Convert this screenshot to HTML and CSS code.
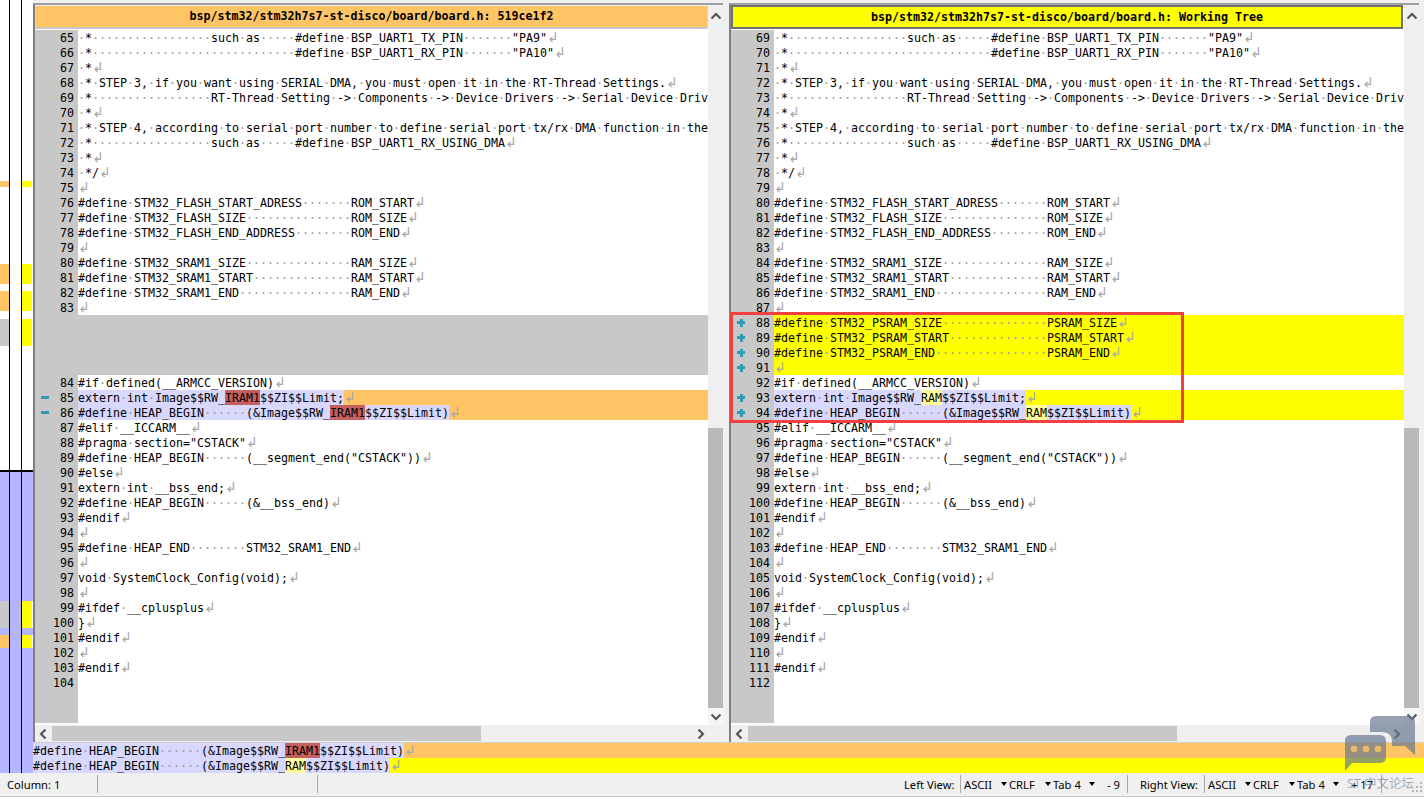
FILE: index.html
```html
<!DOCTYPE html>
<html lang="en">
<head>
  <meta charset="UTF-8">
  <title>bsp/stm32/stm32h7s7-st-disco/board/board.h</title>
  <link rel="stylesheet" href="styles.css">
</head>
<body>

<div class="window">
  <!-- location pane -->
  <div class="loc">
    <div class="loc-col col-a">
      <span class="seg" style="height:178px"></span><span class="seg orange" style="height:6px"></span>
      <span class="seg" style="height:77px"></span><span class="seg orange" style="height:20px"></span>
      <span class="seg" style="height:7px"></span><span class="seg orange" style="height:20px"></span>
      <span class="seg" style="height:8px"></span><span class="seg gray" style="height:27px"></span>
      <span class="seg" style="height:124px"></span><span class="seg black"></span>
      <span class="seg purple" style="height:129px"></span><span class="seg gray" style="height:27px"></span>
      <span class="seg purple" style="height:7px"></span><span class="seg orange" style="height:13px"></span>
      <span class="seg purple fill"></span>
    </div>
    <div class="loc-col col-b">
      <span class="seg" style="height:467px"></span><span class="seg black"></span>
      <span class="seg purple fill"></span>
    </div>
    <div class="loc-col col-c">
      <span class="seg" style="height:178px"></span><span class="seg yellow" style="height:6px"></span>
      <span class="seg" style="height:77px"></span><span class="seg yellow" style="height:20px"></span>
      <span class="seg" style="height:7px"></span><span class="seg yellow" style="height:20px"></span>
      <span class="seg" style="height:8px"></span><span class="seg yellow" style="height:27px"></span>
      <span class="seg" style="height:124px"></span><span class="seg black"></span>
      <span class="seg purple" style="height:129px"></span><span class="seg yellow" style="height:27px"></span>
      <span class="seg purple" style="height:7px"></span><span class="seg yellow" style="height:13px"></span>
      <span class="seg purple fill"></span>
    </div>
  </div>

  <div class="main">
    <div class="panes">

      <!-- left file -->
      <div class="pane">
        <div class="pane-body">
          <div class="view">
            <div class="pane-title left-title">bsp/stm32/stm32h7s7-st-disco/board/board.h: 519ce1f2</div>
            <div class="lines">
              <div class="row"><span class="mark"></span><span class="num">65</span><span class="code"><i>·</i>*<i>·················</i>such<i>·</i>as<i>·····</i>#define<i>·</i>BSP_UART1_TX_PIN<i>·······</i>"PA9"<b>↲</b></span></div>
              <div class="row"><span class="mark"></span><span class="num">66</span><span class="code"><i>·</i>*<i>·····························</i>#define<i>·</i>BSP_UART1_RX_PIN<i>·······</i>"PA10"<b>↲</b></span></div>
              <div class="row"><span class="mark"></span><span class="num">67</span><span class="code"><i>·</i>*<b>↲</b></span></div>
              <div class="row"><span class="mark"></span><span class="num">68</span><span class="code"><i>·</i>*<i>·</i>STEP<i>·</i>3,<i>·</i>if<i>·</i>you<i>·</i>want<i>·</i>using<i>·</i>SERIAL<i>·</i>DMA,<i>·</i>you<i>·</i>must<i>·</i>open<i>·</i>it<i>·</i>in<i>·</i>the<i>·</i>RT-Thread<i>·</i>Settings.<b>↲</b></span></div>
              <div class="row"><span class="mark"></span><span class="num">69</span><span class="code"><i>·</i>*<i>·················</i>RT-Thread<i>·</i>Setting<i>·</i>-&gt;<i>·</i>Components<i>·</i>-&gt;<i>·</i>Device<i>·</i>Drivers<i>·</i>-&gt;<i>·</i>Serial<i>·</i>Device<i>·</i>Drivers<b>↲</b></span></div>
              <div class="row"><span class="mark"></span><span class="num">70</span><span class="code"><i>·</i>*<b>↲</b></span></div>
              <div class="row"><span class="mark"></span><span class="num">71</span><span class="code"><i>·</i>*<i>·</i>STEP<i>·</i>4,<i>·</i>according<i>·</i>to<i>·</i>serial<i>·</i>port<i>·</i>number<i>·</i>to<i>·</i>define<i>·</i>serial<i>·</i>port<i>·</i>tx/rx<i>·</i>DMA<i>·</i>function<i>·</i>in<i>·</i>the<i>·</i>board.h<b>↲</b></span></div>
              <div class="row"><span class="mark"></span><span class="num">72</span><span class="code"><i>·</i>*<i>·················</i>such<i>·</i>as<i>·····</i>#define<i>·</i>BSP_UART1_RX_USING_DMA<b>↲</b></span></div>
              <div class="row"><span class="mark"></span><span class="num">73</span><span class="code"><i>·</i>*<b>↲</b></span></div>
              <div class="row"><span class="mark"></span><span class="num">74</span><span class="code"><i>·</i>*/<b>↲</b></span></div>
              <div class="row"><span class="mark"></span><span class="num">75</span><span class="code"><b>↲</b></span></div>
              <div class="row"><span class="mark"></span><span class="num">76</span><span class="code">#define<i>·</i>STM32_FLASH_START_ADRESS<i>·······</i>ROM_START<b>↲</b></span></div>
              <div class="row"><span class="mark"></span><span class="num">77</span><span class="code">#define<i>·</i>STM32_FLASH_SIZE<i>···············</i>ROM_SIZE<b>↲</b></span></div>
              <div class="row"><span class="mark"></span><span class="num">78</span><span class="code">#define<i>·</i>STM32_FLASH_END_ADDRESS<i>········</i>ROM_END<b>↲</b></span></div>
              <div class="row"><span class="mark"></span><span class="num">79</span><span class="code"><b>↲</b></span></div>
              <div class="row"><span class="mark"></span><span class="num">80</span><span class="code">#define<i>·</i>STM32_SRAM1_SIZE<i>···············</i>RAM_SIZE<b>↲</b></span></div>
              <div class="row"><span class="mark"></span><span class="num">81</span><span class="code">#define<i>·</i>STM32_SRAM1_START<i>··············</i>RAM_START<b>↲</b></span></div>
              <div class="row"><span class="mark"></span><span class="num">82</span><span class="code">#define<i>·</i>STM32_SRAM1_END<i>················</i>RAM_END<b>↲</b></span></div>
              <div class="row"><span class="mark"></span><span class="num">83</span><span class="code"><b>↲</b></span></div>
              <div class="row filler"></div>
              <div class="row filler"></div>
              <div class="row filler"></div>
              <div class="row filler"></div>
              <div class="row"><span class="mark"></span><span class="num">84</span><span class="code">#if<i>·</i>defined(__ARMCC_VERSION)<b>↲</b></span></div>
              <div class="row"><span class="mark minus"></span><span class="num">85</span><span class="code orange"><span class="hi">extern<i>·</i>int<i>·</i>Image$$RW_<span class="del">IRAM1</span>$$ZI$$Limit;</span><b>↲</b></span></div>
              <div class="row"><span class="mark minus"></span><span class="num">86</span><span class="code orange"><span class="hi">#define<i>·</i>HEAP_BEGIN<i>······</i>(&amp;Image$$RW_<span class="del">IRAM1</span>$$ZI$$Limit)</span><b>↲</b></span></div>
              <div class="row"><span class="mark"></span><span class="num">87</span><span class="code">#elif<i>·</i>__ICCARM__<b>↲</b></span></div>
              <div class="row"><span class="mark"></span><span class="num">88</span><span class="code">#pragma<i>·</i>section="CSTACK"<b>↲</b></span></div>
              <div class="row"><span class="mark"></span><span class="num">89</span><span class="code">#define<i>·</i>HEAP_BEGIN<i>······</i>(__segment_end("CSTACK"))<b>↲</b></span></div>
              <div class="row"><span class="mark"></span><span class="num">90</span><span class="code">#else<b>↲</b></span></div>
              <div class="row"><span class="mark"></span><span class="num">91</span><span class="code">extern<i>·</i>int<i>·</i>__bss_end;<b>↲</b></span></div>
              <div class="row"><span class="mark"></span><span class="num">92</span><span class="code">#define<i>·</i>HEAP_BEGIN<i>······</i>(&amp;__bss_end)<b>↲</b></span></div>
              <div class="row"><span class="mark"></span><span class="num">93</span><span class="code">#endif<b>↲</b></span></div>
              <div class="row"><span class="mark"></span><span class="num">94</span><span class="code"><b>↲</b></span></div>
              <div class="row"><span class="mark"></span><span class="num">95</span><span class="code">#define<i>·</i>HEAP_END<i>········</i>STM32_SRAM1_END<b>↲</b></span></div>
              <div class="row"><span class="mark"></span><span class="num">96</span><span class="code"><b>↲</b></span></div>
              <div class="row"><span class="mark"></span><span class="num">97</span><span class="code">void<i>·</i>SystemClock_Config(void);<b>↲</b></span></div>
              <div class="row"><span class="mark"></span><span class="num">98</span><span class="code"><b>↲</b></span></div>
              <div class="row"><span class="mark"></span><span class="num">99</span><span class="code">#ifdef<i>·</i>__cplusplus<b>↲</b></span></div>
              <div class="row"><span class="mark"></span><span class="num">100</span><span class="code">}<b>↲</b></span></div>
              <div class="row"><span class="mark"></span><span class="num">101</span><span class="code">#endif<b>↲</b></span></div>
              <div class="row"><span class="mark"></span><span class="num">102</span><span class="code"><b>↲</b></span></div>
              <div class="row"><span class="mark"></span><span class="num">103</span><span class="code">#endif<b>↲</b></span></div>
              <div class="row"><span class="mark"></span><span class="num">104</span><span class="code"></span></div>
              <div class="row rest"><span class="mark"></span><span class="num"></span><span class="code"></span></div>
            </div>
          </div>
          <div class="vscroll">
            <span class="arrow-box"><svg width="12" height="10" viewBox="0 0 12 10"><path d="M1.5 7.5 6 3l4.5 4.5" class="chev"/></svg></span>
            <span class="vtrack"></span>
            <span class="vthumb"></span>
            <span class="arrow-box down"><svg width="12" height="10" viewBox="0 0 12 10"><path d="M1.5 2.5 6 7l4.5-4.5" class="chev"/></svg></span>
          </div>
        </div>
        <div class="hscroll">
          <span class="h-arrow"><svg width="10" height="12" viewBox="0 0 10 12"><path d="M7.5 1.5 3 6l4.5 4.5" class="chev"/></svg></span>
          <span class="hthumb"></span>
          <span class="htrack"></span>
          <span class="h-arrow"><svg width="10" height="12" viewBox="0 0 10 12"><path d="M2.5 1.5 7 6l-4.5 4.5" class="chev"/></svg></span>
          <span class="corner"></span>
        </div>
      </div>

      <!-- right file -->
      <div class="pane">
        <div class="pane-body">
          <div class="view">
            <div class="pane-title right-title">bsp/stm32/stm32h7s7-st-disco/board/board.h: Working Tree</div>
            <div class="lines">
              <div class="row"><span class="mark"></span><span class="num">69</span><span class="code"><i>·</i>*<i>·················</i>such<i>·</i>as<i>·····</i>#define<i>·</i>BSP_UART1_TX_PIN<i>·······</i>"PA9"<b>↲</b></span></div>
              <div class="row"><span class="mark"></span><span class="num">70</span><span class="code"><i>·</i>*<i>·····························</i>#define<i>·</i>BSP_UART1_RX_PIN<i>·······</i>"PA10"<b>↲</b></span></div>
              <div class="row"><span class="mark"></span><span class="num">71</span><span class="code"><i>·</i>*<b>↲</b></span></div>
              <div class="row"><span class="mark"></span><span class="num">72</span><span class="code"><i>·</i>*<i>·</i>STEP<i>·</i>3,<i>·</i>if<i>·</i>you<i>·</i>want<i>·</i>using<i>·</i>SERIAL<i>·</i>DMA,<i>·</i>you<i>·</i>must<i>·</i>open<i>·</i>it<i>·</i>in<i>·</i>the<i>·</i>RT-Thread<i>·</i>Settings.<b>↲</b></span></div>
              <div class="row"><span class="mark"></span><span class="num">73</span><span class="code"><i>·</i>*<i>·················</i>RT-Thread<i>·</i>Setting<i>·</i>-&gt;<i>·</i>Components<i>·</i>-&gt;<i>·</i>Device<i>·</i>Drivers<i>·</i>-&gt;<i>·</i>Serial<i>·</i>Device<i>·</i>Drivers<b>↲</b></span></div>
              <div class="row"><span class="mark"></span><span class="num">74</span><span class="code"><i>·</i>*<b>↲</b></span></div>
              <div class="row"><span class="mark"></span><span class="num">75</span><span class="code"><i>·</i>*<i>·</i>STEP<i>·</i>4,<i>·</i>according<i>·</i>to<i>·</i>serial<i>·</i>port<i>·</i>number<i>·</i>to<i>·</i>define<i>·</i>serial<i>·</i>port<i>·</i>tx/rx<i>·</i>DMA<i>·</i>function<i>·</i>in<i>·</i>the<i>·</i>board.h<b>↲</b></span></div>
              <div class="row"><span class="mark"></span><span class="num">76</span><span class="code"><i>·</i>*<i>·················</i>such<i>·</i>as<i>·····</i>#define<i>·</i>BSP_UART1_RX_USING_DMA<b>↲</b></span></div>
              <div class="row"><span class="mark"></span><span class="num">77</span><span class="code"><i>·</i>*<b>↲</b></span></div>
              <div class="row"><span class="mark"></span><span class="num">78</span><span class="code"><i>·</i>*/<b>↲</b></span></div>
              <div class="row"><span class="mark"></span><span class="num">79</span><span class="code"><b>↲</b></span></div>
              <div class="row"><span class="mark"></span><span class="num">80</span><span class="code">#define<i>·</i>STM32_FLASH_START_ADRESS<i>·······</i>ROM_START<b>↲</b></span></div>
              <div class="row"><span class="mark"></span><span class="num">81</span><span class="code">#define<i>·</i>STM32_FLASH_SIZE<i>···············</i>ROM_SIZE<b>↲</b></span></div>
              <div class="row"><span class="mark"></span><span class="num">82</span><span class="code">#define<i>·</i>STM32_FLASH_END_ADDRESS<i>········</i>ROM_END<b>↲</b></span></div>
              <div class="row"><span class="mark"></span><span class="num">83</span><span class="code"><b>↲</b></span></div>
              <div class="row"><span class="mark"></span><span class="num">84</span><span class="code">#define<i>·</i>STM32_SRAM1_SIZE<i>···············</i>RAM_SIZE<b>↲</b></span></div>
              <div class="row"><span class="mark"></span><span class="num">85</span><span class="code">#define<i>·</i>STM32_SRAM1_START<i>··············</i>RAM_START<b>↲</b></span></div>
              <div class="row"><span class="mark"></span><span class="num">86</span><span class="code">#define<i>·</i>STM32_SRAM1_END<i>················</i>RAM_END<b>↲</b></span></div>
              <div class="row"><span class="mark"></span><span class="num">87</span><span class="code"><b>↲</b></span></div>
              <div class="row"><span class="mark plus"></span><span class="num">88</span><span class="code yellow">#define<i>·</i>STM32_PSRAM_SIZE<i>···············</i>PSRAM_SIZE<b>↲</b></span></div>
              <div class="row"><span class="mark plus"></span><span class="num">89</span><span class="code yellow">#define<i>·</i>STM32_PSRAM_START<i>··············</i>PSRAM_START<b>↲</b></span></div>
              <div class="row"><span class="mark plus"></span><span class="num">90</span><span class="code yellow">#define<i>·</i>STM32_PSRAM_END<i>················</i>PSRAM_END<b>↲</b></span></div>
              <div class="row"><span class="mark plus"></span><span class="num">91</span><span class="code yellow"><b>↲</b></span></div>
              <div class="row"><span class="mark"></span><span class="num">92</span><span class="code">#if<i>·</i>defined(__ARMCC_VERSION)<b>↲</b></span></div>
              <div class="row"><span class="mark plus"></span><span class="num">93</span><span class="code yellow"><span class="hi">extern<i>·</i>int<i>·</i>Image$$RW_<span class="add">RAM</span>$$ZI$$Limit;</span><b>↲</b></span></div>
              <div class="row"><span class="mark plus"></span><span class="num">94</span><span class="code yellow"><span class="hi">#define<i>·</i>HEAP_BEGIN<i>······</i>(&amp;Image$$RW_<span class="add">RAM</span>$$ZI$$Limit)</span><b>↲</b></span></div>
              <div class="row"><span class="mark"></span><span class="num">95</span><span class="code">#elif<i>·</i>__ICCARM__<b>↲</b></span></div>
              <div class="row"><span class="mark"></span><span class="num">96</span><span class="code">#pragma<i>·</i>section="CSTACK"<b>↲</b></span></div>
              <div class="row"><span class="mark"></span><span class="num">97</span><span class="code">#define<i>·</i>HEAP_BEGIN<i>······</i>(__segment_end("CSTACK"))<b>↲</b></span></div>
              <div class="row"><span class="mark"></span><span class="num">98</span><span class="code">#else<b>↲</b></span></div>
              <div class="row"><span class="mark"></span><span class="num">99</span><span class="code">extern<i>·</i>int<i>·</i>__bss_end;<b>↲</b></span></div>
              <div class="row"><span class="mark"></span><span class="num">100</span><span class="code">#define<i>·</i>HEAP_BEGIN<i>······</i>(&amp;__bss_end)<b>↲</b></span></div>
              <div class="row"><span class="mark"></span><span class="num">101</span><span class="code">#endif<b>↲</b></span></div>
              <div class="row"><span class="mark"></span><span class="num">102</span><span class="code"><b>↲</b></span></div>
              <div class="row"><span class="mark"></span><span class="num">103</span><span class="code">#define<i>·</i>HEAP_END<i>········</i>STM32_SRAM1_END<b>↲</b></span></div>
              <div class="row"><span class="mark"></span><span class="num">104</span><span class="code"><b>↲</b></span></div>
              <div class="row"><span class="mark"></span><span class="num">105</span><span class="code">void<i>·</i>SystemClock_Config(void);<b>↲</b></span></div>
              <div class="row"><span class="mark"></span><span class="num">106</span><span class="code"><b>↲</b></span></div>
              <div class="row"><span class="mark"></span><span class="num">107</span><span class="code">#ifdef<i>·</i>__cplusplus<b>↲</b></span></div>
              <div class="row"><span class="mark"></span><span class="num">108</span><span class="code">}<b>↲</b></span></div>
              <div class="row"><span class="mark"></span><span class="num">109</span><span class="code">#endif<b>↲</b></span></div>
              <div class="row"><span class="mark"></span><span class="num">110</span><span class="code"><b>↲</b></span></div>
              <div class="row"><span class="mark"></span><span class="num">111</span><span class="code">#endif<b>↲</b></span></div>
              <div class="row"><span class="mark"></span><span class="num">112</span><span class="code"></span></div>
              <div class="row rest"><span class="mark"></span><span class="num"></span><span class="code"></span></div>
            </div>
          </div>
          <div class="vscroll">
            <span class="arrow-box"><svg width="12" height="10" viewBox="0 0 12 10"><path d="M1.5 7.5 6 3l4.5 4.5" class="chev"/></svg></span>
            <span class="vtrack"></span>
            <span class="vthumb"></span>
            <span class="arrow-box down"><svg width="12" height="10" viewBox="0 0 12 10"><path d="M1.5 2.5 6 7l4.5-4.5" class="chev"/></svg></span>
          </div>
        </div>
        <div class="hscroll">
          <span class="h-arrow"><svg width="10" height="12" viewBox="0 0 10 12"><path d="M7.5 1.5 3 6l4.5 4.5" class="chev"/></svg></span>
          <span class="hthumb"></span>
          <span class="htrack"></span>
          <span class="h-arrow"><svg width="10" height="12" viewBox="0 0 10 12"><path d="M2.5 1.5 7 6l-4.5 4.5" class="chev"/></svg></span>
          <span class="corner"></span>
        </div>
      </div>
    </div>

    <!-- current line diff -->
    <div class="diff">
      <div class="diff-row orange"><span class="hi">#define<i>·</i>HEAP_BEGIN<i>······</i>(&amp;Image$$RW_<span class="del">IRAM1</span>$$ZI$$Limit)</span><b>↲</b></div>
      <div class="diff-row yellow"><span class="hi">#define<i>·</i>HEAP_BEGIN<i>······</i>(&amp;Image$$RW_<span class="add">RAM</span>$$ZI$$Limit)</span><b>↲</b></div>
    </div>
  </div>
</div>

<div class="status">
  <div class="cell col-cell">Column: 1</div>
  <div class="cell blank-cell"></div>
  <div class="cell view-label">Left View:</div>
  <div class="cell combo enc sep">ASCII<span class="caret"></span></div>
  <div class="cell combo eol">CRLF<span class="caret"></span></div>
  <div class="cell combo tab">Tab 4<span class="caret"></span></div>
  <div class="cell count left-count">- 9</div>
  <div class="cell view-label right-label sep">Right View:</div>
  <div class="cell combo enc sep">ASCII<span class="caret"></span></div>
  <div class="cell combo eol">CRLF<span class="caret"></span></div>
  <div class="cell combo tab">Tab 4<span class="caret"></span></div>
  <div class="cell count right-count">+ 17</div>
  <div class="cell grip sep">
    <svg width="12" height="12" viewBox="0 0 12 12"><path d="M9 1h2v2H9zM5 5h2v2H5zM9 5h2v2H9zM1 9h2v2H1zM5 9h2v2H5zM9 9h2v2H9z" fill="#b4b4b4"/></svg>
  </div>
</div>
<div class="bottom-edge"></div>

<!-- red box drawn over the added lines -->
<div class="callout"></div>

<!-- forum watermark -->
<div class="watermark">
  <svg width="74" height="58" viewBox="0 0 74 58">
    <path d="M31 1H64Q70 1 70 7V40L60 31H47V26Q47 17 36 17H25V7Q25 1 31 1Z" class="bubble"/>
    <path d="M6 20H35Q41 20 41 26V42Q41 48 35 48H7L0 56V26Q0 20 6 20Z" class="bubble"/>
    <circle cx="9" cy="34" r="3.3" class="dot"/>
    <circle cx="21" cy="34" r="3.3" class="dot"/>
    <circle cx="33" cy="34" r="3.3" class="dot"/>
  </svg>
  <span class="wm-text">ST 中文论坛</span>
</div>

</body>
</html>
```

FILE: styles.css
```css
html, body {
  margin: 0;
  padding: 0;
  height: 799px;
  overflow: hidden;
}
body {
  background-color: #f0f0f0;
  font-family: "DejaVu Sans Mono", monospace;
  position: relative;
}
.window {
  display: flex;
  height: 773px;
}

/* location pane */
.loc {
  width: 33px;
  display: flex;
  background-color: #fff;
  flex-shrink: 0;
}
.loc-col {
  display: flex;
  flex-direction: column;
  box-sizing: border-box;
  padding-top: 3px;
}
.col-a {
  width: 10px;
  border-right: 1px solid #000;
}
.col-b {
  width: 12px;
  border-right: 1px solid #000;
}
.col-c {
  width: 11px;
}
.seg {
  display: block;
  flex-shrink: 0;
}
.seg.fill {
  flex: 1;
}
.seg.black {
  height: 2px;
  background-color: #000;
}
.seg.purple {
  background-color: #b4b4ff;
}
.seg.gray {
  background-color: #c8c8c8;
}
.seg.orange {
  background-color: #ffc565;
}
.seg.yellow {
  background-color: #ffff00;
  margin-right: 1px;
}

/* file panes */
.main {
  flex: 1;
  display: flex;
  flex-direction: column;
  min-width: 0;
}
.panes {
  display: flex;
  height: 743px;
  flex-shrink: 0;
  padding-top: 3px;
  box-sizing: border-box;
}
.pane {
  width: 690px;
  margin-right: 6px;
  display: flex;
  flex-direction: column;
  border-left: 2px solid #808080;
  border-top: 2px solid #a0a0a0;
  box-sizing: border-box;
}
.pane:last-child {
  margin-right: 0;
}
.pane-body {
  flex: 1;
  display: flex;
  min-height: 0;
}
.view {
  width: 673px;
  display: flex;
  flex-direction: column;
  background-color: #fff;
}
.pane-title {
  height: 24px;
  box-sizing: border-box;
  text-align: center;
  font-size: 11.63px;
  font-weight: bold;
  line-height: 21px;
  flex-shrink: 0;
}
.left-title {
  background-color: #ffc565;
  border: 1px solid #d8d8d8;
  border-top: 1px solid #f0f0f0;
  border-bottom: 2px solid #c8c8c8;
}
.right-title {
  background-color: #ffff00;
  border: 2px solid #707070;
  border-bottom-width: 2px;
  margin-right: 1px;
}
.lines {
  flex: 1;
  display: flex;
  flex-direction: column;
  min-height: 0;
  padding-top: 1px;
}
.row {
  display: flex;
  height: 15px;
  flex-shrink: 0;
  font-size: 11.63px;
  line-height: 17px;
  white-space: pre;
}
.row.rest {
  flex: 1;
  margin-bottom: 2px;
}
.row.filler {
  background-color: #c8c8c8;
}
.mark {
  width: 18px;
  background-color: #c8c8c8;
  flex-shrink: 0;
}
.mark.minus {
  background: linear-gradient(#2f9db3, #2f9db3) 6px center / 8px 3px no-repeat, #c8c8c8;
}
.mark.plus {
  background: linear-gradient(#2f9db3, #2f9db3) 6px center / 8px 3px no-repeat,
    linear-gradient(#2f9db3, #2f9db3) 8.5px center / 3px 8px no-repeat, #c8c8c8;
}
.num {
  width: 25px;
  box-sizing: border-box;
  padding-right: 4px;
  text-align: right;
  background-color: #c8c8c8;
  flex-shrink: 0;
}
.code {
  flex: 1;
  overflow: hidden;
  min-width: 0;
}
.code.orange, .diff-row.orange {
  background-color: #ffc565;
}
.code.yellow, .diff-row.yellow {
  background-color: #ffff00;
}
.row i, .diff i {
  font-style: normal;
  color: #9a9a9a;
}
.row b, .diff b {
  display: inline-block;
  width: 9px;
  height: 15px;
  font-family: "DejaVu Sans", sans-serif;
  font-size: 14px;
  line-height: 15px;
  font-weight: normal;
  color: #a8a8a8;
  vertical-align: top;
  overflow: visible;
}
.hi, .del, .add {
  display: inline-block;
  height: 15px;
  vertical-align: top;
}
.hi {
  background-color: #d8d8ff;
}
.del {
  background-color: #c46060;
}
.add {
  background-color: #ffff99;
}

/* scrollbars */
.vscroll {
  width: 15px;
  display: flex;
  flex-direction: column;
  background-color: #efefef;
}
.arrow-box {
  height: 20px;
  display: flex;
  align-items: center;
  justify-content: center;
  padding-top: 2px;
  box-sizing: border-box;
}
.arrow-box.down {
  height: 17px;
  background-color: #f6f6f6;
  padding-top: 0;
}
.vtrack {
  height: 403px;
}
.vthumb {
  flex: 1;
  background-color: #b9b9b9;
}
.chev {
  fill: none;
  stroke: #555;
  stroke-width: 2.2;
}
.hscroll {
  height: 15px;
  margin-top: 1px;
  margin-bottom: 2px;
  display: flex;
  background-color: #efefef;
}
.h-arrow {
  width: 15px;
  display: flex;
  align-items: center;
  justify-content: center;
  flex-shrink: 0;
}
.hthumb {
  width: 429px;
  margin-left: 2px;
  background-color: #c8c8c8;
}
.htrack {
  flex: 1;
}
.corner {
  width: 15px;
  flex-shrink: 0;
}

/* diff of current line */
.diff {
  flex: 1;
  border-top: 1px solid #d0d0d0;
  font-size: 11.63px;
  line-height: 17px;
  margin-top: -1px;
  background-color: #fff;
}
.diff-row {
  height: 15px;
  white-space: pre;
}

/* status bar */
.status {
  height: 23px;
  display: flex;
  align-items: center;
  font-family: "Noto Sans", sans-serif;
  font-size: 11.2px;
  color: #000;
  background-color: #f0f0f0;
  padding-bottom: 1px;
  box-sizing: border-box;
}
.cell {
  height: 18px;
  box-sizing: border-box;
  display: flex;
  align-items: center;
  flex-shrink: 0;
  white-space: pre;
}
.col-cell {
  width: 98px;
  padding-left: 7px;
  border-right: 1px solid #a8a8a8;
}
.blank-cell {
  width: 220px;
  border-right: 1px solid #a8a8a8;
}
.view-label {
  width: 56px;
  margin-left: 586px;
}
.right-label {
  width: 77px;
  margin-left: 0;
  padding-left: 12px;
}
.sep {
  border-left: 1px solid #a8a8a8;
}
.combo {
  justify-content: space-between;
  padding-right: 2px;
}
.enc {
  width: 49px;
  padding-left: 3px;
}
.eol {
  width: 44px;
}
.tab {
  width: 45px;
  padding-right: 3px;
}
.count {
  padding-left: 9px;
}
.left-count {
  width: 29px;
}
.right-count {
  width: 39px;
}
.caret {
  width: 0;
  height: 0;
  border-left: 3.5px solid transparent;
  border-right: 3.5px solid transparent;
  border-top: 4px solid #000;
}
.grip {
  width: 43px;
  justify-content: flex-end;
  align-items: flex-end;
  padding-right: 1px;
}
.bottom-edge {
  height: 3px;
  border-top: 1px solid #c8c8c8;
  background-color: #fff;
}

/* overlays */
.callout {
  position: absolute;
  left: 730px;
  top: 312px;
  width: 454px;
  height: 111px;
  box-sizing: border-box;
  border: 3px solid #f04040;
}
.watermark {
  position: absolute;
  left: 1345px;
  top: 715px;
  width: 74px;
  height: 80px;
}
.watermark svg {
  display: block;
}
.bubble {
  fill: #64768f;
  opacity: 0.68;
}
.dot {
  fill: #ffc565;
  opacity: 0.8;
}
.wm-text {
  position: absolute;
  left: 2px;
  top: 61px;
  font-family: "Noto Sans", "Noto Sans CJK SC", sans-serif;
  font-size: 12.5px;
  line-height: 16px;
  white-space: nowrap;
  color: rgba(110, 125, 145, 0.6);
}
```
